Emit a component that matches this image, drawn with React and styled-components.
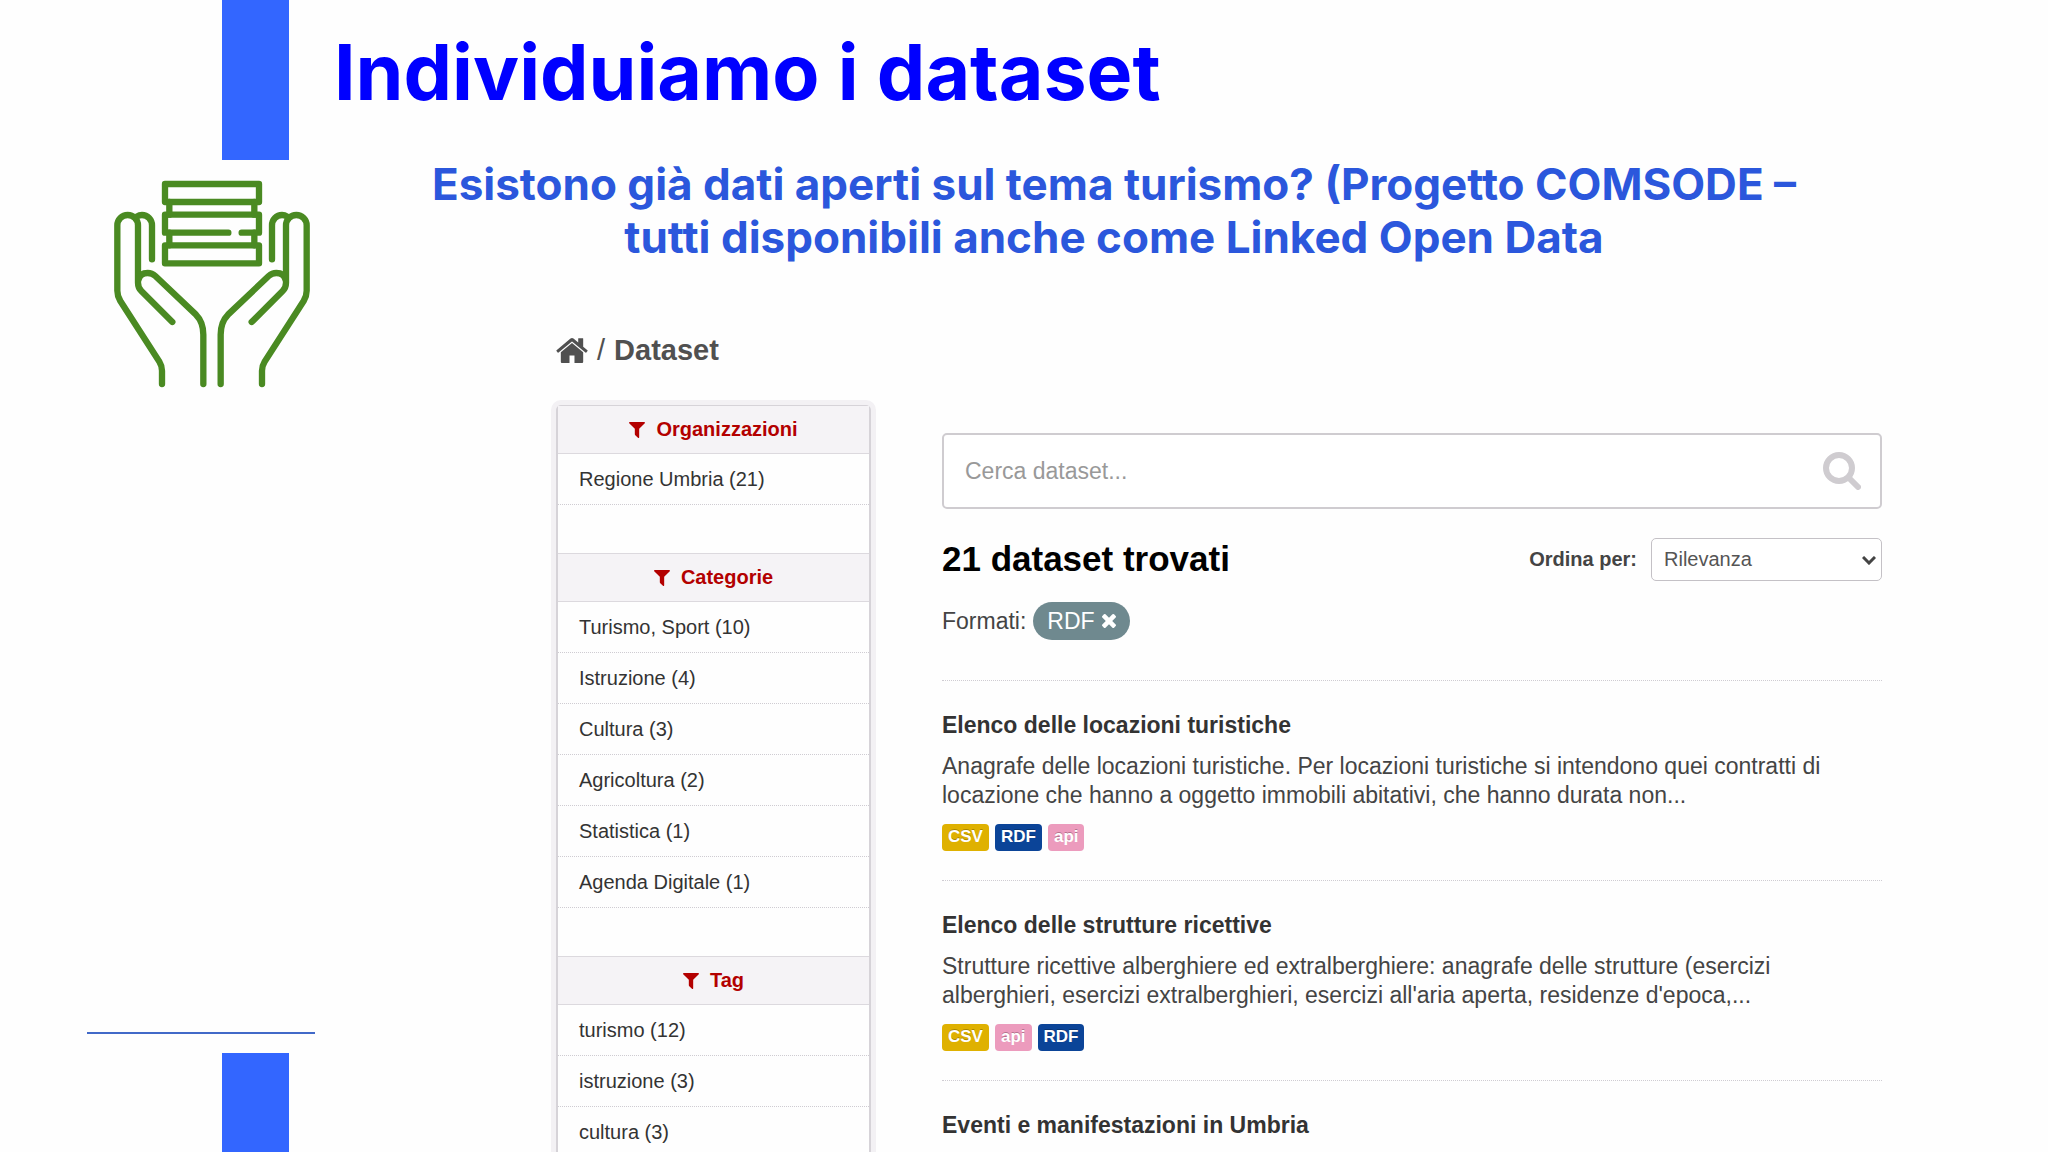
import React from 'react';
import styled, { createGlobalStyle } from 'styled-components';

const GlobalStyle = createGlobalStyle`
  * {
    box-sizing: border-box;
  }

  body {
    margin: 0;
    background: #fefefe;
    color: #444;
    font-family: 'Helvetica Neue', 'Liberation Sans', Arial, sans-serif;
  }
`;

const Slide = styled.div`
  display: grid;
  grid-template-columns: 334px 1fr;
  height: 100vh;
  overflow: hidden;
`;

const Rail = styled.aside`
  display: flex;
  flex-direction: column;
  height: 100vh;
`;

const Bar = styled.div`
  flex: none;
  width: 67px;
  height: ${(props) => props.$height};
  margin-left: 222px;
  background: #3366ff;
`;

const HandsIcon = styled.svg`
  flex: none;
  width: 198px;
  height: 208px;
  margin: 20px 0 auto 113px;
  fill: none;
  stroke: #4a8a22;
  stroke-width: 19;
  stroke-linecap: round;
  stroke-linejoin: round;
`;

const Rule = styled.hr`
  width: 228px;
  height: 2px;
  margin: 0 0 19px 87px;
  border: none;
  background: #4169c8;
`;

const Content = styled.main`
  min-width: 0;
`;

const Title = styled.h1`
  margin: 25px 0 0;
  font-family: 'Century Gothic', Inter, sans-serif;
  font-size: 77px;
  font-weight: 700;
  line-height: 94px;
  color: #0000ff;
`;

const Subtitle = styled.p`
  margin: 39px 0 0;
  padding-right: 154px;
  font-family: 'Century Gothic', Inter, sans-serif;
  font-size: 44px;
  font-weight: 700;
  line-height: 53px;
  text-align: center;
  color: #2b57dc;
`;

const Portal = styled.section`
  margin: 69px 166px 0 222px;
`;

const Breadcrumb = styled.nav`
  display: flex;
  align-items: center;
  gap: 9px;
  font-size: 29px;
  line-height: 34px;
  color: #505050;

  a {
    display: flex;
    color: inherit;
    font-weight: 700;
    text-decoration: none;
  }

  svg {
    width: 32px;
    height: 25px;
    fill: currentColor;
  }
`;

const Columns = styled.div`
  display: grid;
  grid-template-columns: 315px 1fr;
  column-gap: 71px;
  align-items: start;
  margin-top: 38px;
`;

const Sidebar = styled.div`
  border: 2px solid #d6d3d8;
  border-top-width: 1px;
  border-radius: 5px;
  box-shadow: 0 0 0 5px #f3f1f4;
`;

const FacetTitle = styled.h2`
  display: flex;
  align-items: center;
  justify-content: center;
  gap: 11px;
  height: 48px;
  margin: 0;
  border-bottom: 1px solid #dcd9de;
  background: #f5f3f6;
  font-size: 20px;
  font-weight: 700;
  color: #b30000;

  svg {
    width: 16px;
    height: 16px;
    fill: currentColor;
  }
`;

const FacetList = styled.ul`
  margin: 0;
  padding: 0 0 48px;
  border-bottom: 1px solid #dcd9de;
  list-style: none;
`;

const FacetItem = styled.li`
  padding-left: 21px;
  border-bottom: 1px dotted #cfccd2;
  font-size: 20px;
  line-height: 50px;

  a {
    color: #333;
    text-decoration: none;
  }
`;

const Results = styled.div`
  min-width: 0;
  padding-top: 28px;
`;

const SearchBox = styled.form`
  display: flex;
  align-items: center;
  height: 76px;
  padding: 0 19px 0 21px;
  border: 2px solid #cfccd0;
  border-radius: 5px;
  background: #fff;

  input {
    flex: 1;
    min-width: 0;
    padding: 0;
    border: none;
    outline: none;
    background: none;
    font-family: inherit;
    font-size: 23px;
    color: #444;
  }

  input::placeholder {
    color: #999;
    opacity: 1;
  }

  button {
    display: flex;
    padding: 0;
    border: none;
    background: none;
    cursor: pointer;
  }

  svg {
    width: 38px;
    height: 38px;
    fill: none;
    stroke: #cfccd0;
    stroke-width: 6;
    stroke-linecap: round;
  }
`;

const ResultsHead = styled.div`
  display: flex;
  justify-content: space-between;
  align-items: center;
  height: 44px;
  margin-top: 28px;
`;

const Count = styled.h2`
  margin: 0;
  font-size: 35px;
  font-weight: 700;
  line-height: 44px;
  color: #000;
`;

const Sort = styled.div`
  display: flex;
  align-items: center;
  gap: 14px;
  font-size: 20px;

  label {
    font-weight: 700;
  }
`;

const SelectWrap = styled.div`
  position: relative;

  select {
    appearance: none;
    width: 231px;
    height: 43px;
    padding: 0 30px 0 12px;
    border: 1px solid #c4c1c6;
    border-radius: 5px;
    background: #fff;
    font-family: inherit;
    font-size: 20px;
    color: #555;
  }

  svg {
    position: absolute;
    top: 18px;
    right: 6px;
    width: 14px;
    height: 9px;
    fill: none;
    stroke: #444;
    stroke-width: 3;
    pointer-events: none;
  }
`;

const Filters = styled.div`
  display: flex;
  align-items: center;
  gap: 7px;
  margin: 21px 0 40px;
  font-size: 23px;
`;

const Pill = styled.span`
  display: flex;
  align-items: center;
  gap: 7px;
  height: 38px;
  padding: 0 14px;
  border-radius: 19px;
  background: #6f898f;
  color: #fff;

  button {
    display: flex;
    padding: 0;
    border: none;
    background: none;
    color: inherit;
    cursor: pointer;
  }

  svg {
    width: 14px;
    height: 14px;
    fill: currentColor;
  }
`;

const Dataset = styled.article`
  height: 200px;
  padding-top: 30px;
  border-top: 1px dotted #cfccd2;
`;

const DatasetTitle = styled.h3`
  margin: 0 0 12px;
  font-size: 23px;
  font-weight: 700;
  line-height: 29px;

  a {
    color: #333;
    text-decoration: none;
  }
`;

const Description = styled.p`
  margin: 0 0 14px;
  font-size: 23px;
  line-height: 29px;
`;

const Formats = styled.div`
  display: flex;
  gap: 6px;
`;

const formatColors = {
  CSV: '#dfb100',
  RDF: '#0b4498',
  api: '#ec9bbd'
};

const Format = styled.a`
  height: 27px;
  padding: 0 6px;
  border-radius: 4px;
  background: ${(props) => formatColors[props.$format]};
  font-size: 17px;
  font-weight: 700;
  line-height: 26px;
  color: #fff;
  text-decoration: none;
  text-shadow: 0 -1px 0 rgba(0, 0, 0, 0.25);
`;

const facets = [
  { title: 'Organizzazioni', items: ['Regione Umbria (21)'] },
  {
    title: 'Categorie',
    items: [
      'Turismo, Sport (10)',
      'Istruzione (4)',
      'Cultura (3)',
      'Agricoltura (2)',
      'Statistica (1)',
      'Agenda Digitale (1)'
    ]
  },
  { title: 'Tag', items: ['turismo (12)', 'istruzione (3)', 'cultura (3)'] }
];

const datasets = [
  {
    title: 'Elenco delle locazioni turistiche',
    text: [
      'Anagrafe delle locazioni turistiche. Per locazioni turistiche si intendono quei contratti di',
      'locazione che hanno a oggetto immobili abitativi, che hanno durata non...'
    ],
    formats: ['CSV', 'RDF', 'api']
  },
  {
    title: 'Elenco delle strutture ricettive',
    text: [
      'Strutture ricettive alberghiere ed extralberghiere: anagrafe delle strutture (esercizi',
      "alberghieri, esercizi extralberghieri, esercizi all'aria aperta, residenze d'epoca,..."
    ],
    formats: ['CSV', 'api', 'RDF']
  },
  { title: 'Eventi e manifestazioni in Umbria', text: [], formats: [] }
];

const Hand = (props) => (
  <g {...props}>
    <path d="M306 1152V1112Q306 1098 298 1085L181 903Q172 888 172 872V676A31 31 0 0 1 234 676V848Q234 863 244 873L337 966" />
    <path d="M230 650Q238 645 246 645A30 31 0 0 1 276 676V778" />
    <path d="M236 838Q240 819 263 819Q276 819 286 828L408 944Q430 966 430 1004V1152" />
  </g>
);

const Hands = () => (
  <HandsIcon viewBox="159 540 594 624" aria-hidden="true">
    <Hand />
    <Hand transform="translate(912 0) scale(-1 1)" />
    <path d="M315 552H597V606H315ZM315 736H597V790H315Z" />
    <path d="M505 698H315V644H597V698H545" />
    <path d="M328 606V644M583 606V644M328 698V736M583 698V736" />
  </HandsIcon>
);

const HomeIcon = () => (
  <svg viewBox="24 248 1616 1288" aria-hidden="true">
    <path d="M1408 992v480q0 26-19 45t-45 19h-384v-384h-256v384h-384q-26 0-45-19t-19-45v-480q0-1 .5-3t.5-3l575-474 575 474q1 2 1 6zm223-69l-62 74q-8 9-21 11h-3q-13 0-21-7l-692-577-692 577q-12 8-24 7-13-2-21-11l-62-74q-8-10-7-23.5t11-21.5l719-599q32-26 76-26t76 26l244 204v-195q0-14 9-23t23-9h192q14 0 23 9t9 23v408l219 182q10 8 11 21.5t-7 23.5z" />
  </svg>
);

const FilterIcon = () => (
  <svg viewBox="192 256 1408 1408" aria-hidden="true">
    <path d="M1595 295q17 41-14 70l-493 493v742q0 42-39 59-13 5-25 5-27 0-45-19l-256-256q-19-19-19-45v-486l-493-493q-31-29-14-70 17-39 59-39h1280q42 0 59 39z" />
  </svg>
);

const RemoveIcon = () => (
  <svg viewBox="302 366 1188 1188" aria-hidden="true">
    <path d="M1490 1322q0 40-28 68l-136 136q-28 28-68 28t-68-28l-294-294-294 294q-28 28-68 28t-68-28l-136-136q-28-28-28-68t28-68l294-294-294-294q-28-28-28-68t28-68l136-136q28-28 68-28t68 28l294 294 294-294q28-28 68-28t68 28l136 136q28 28 28 68t-28 68l-294 294 294 294q28 28 28 68z" />
  </svg>
);

const App = () => {
  return (
    <>
      <GlobalStyle />
      <Slide>
        <Rail>
          <Bar $height="160px" />
          <Hands />
          <Rule />
          <Bar $height="99px" />
        </Rail>

        <Content>
          <Title>Individuiamo i dataset</Title>
          <Subtitle>
            Esistono già dati aperti sul tema turismo? (Progetto COMSODE –
            <br />
            tutti disponibili anche come Linked Open Data
          </Subtitle>

          <Portal>
            <Breadcrumb>
              <a href="#home" aria-label="Home">
                <HomeIcon />
              </a>
              <span>/</span>
              <a href="#dataset">Dataset</a>
            </Breadcrumb>

            <Columns>
              <Sidebar>
                {facets.map((facet) => (
                  <React.Fragment key={facet.title}>
                    <FacetTitle>
                      <FilterIcon />
                      {facet.title}
                    </FacetTitle>
                    <FacetList>
                      {facet.items.map((item) => (
                        <FacetItem key={item}>
                          <a href="#facet">{item}</a>
                        </FacetItem>
                      ))}
                    </FacetList>
                  </React.Fragment>
                ))}
              </Sidebar>

              <Results>
                <SearchBox onSubmit={(e) => e.preventDefault()}>
                  <input type="text" aria-label="Cerca dataset" placeholder="Cerca dataset..." />
                  <button type="submit" aria-label="Cerca">
                    <svg viewBox="0 0 38 38" aria-hidden="true">
                      <circle cx="16" cy="16" r="13" />
                      <path d="M26 26L35 35" />
                    </svg>
                  </button>
                </SearchBox>

                <ResultsHead>
                  <Count>21 dataset trovati</Count>
                  <Sort>
                    <label htmlFor="sort">Ordina per:</label>
                    <SelectWrap>
                      <select id="sort" defaultValue="rel">
                        <option value="rel">Rilevanza</option>
                      </select>
                      <svg viewBox="0 0 14 9" aria-hidden="true">
                        <path d="M1 1L7 7L13 1" />
                      </svg>
                    </SelectWrap>
                  </Sort>
                </ResultsHead>

                <Filters>
                  <span>Formati:</span>
                  <Pill>
                    RDF
                    <button type="button" aria-label="Rimuovi">
                      <RemoveIcon />
                    </button>
                  </Pill>
                </Filters>

                {datasets.map((dataset) => (
                  <Dataset key={dataset.title}>
                    <DatasetTitle>
                      <a href="#item">{dataset.title}</a>
                    </DatasetTitle>
                    <Description>
                      {dataset.text[0]}
                      <br />
                      {dataset.text[1]}
                    </Description>
                    <Formats>
                      {dataset.formats.map((format) => (
                        <Format key={format} href="#format" $format={format}>
                          {format}
                        </Format>
                      ))}
                    </Formats>
                  </Dataset>
                ))}
              </Results>
            </Columns>
          </Portal>
        </Content>
      </Slide>
    </>
  );
};

export default App;
